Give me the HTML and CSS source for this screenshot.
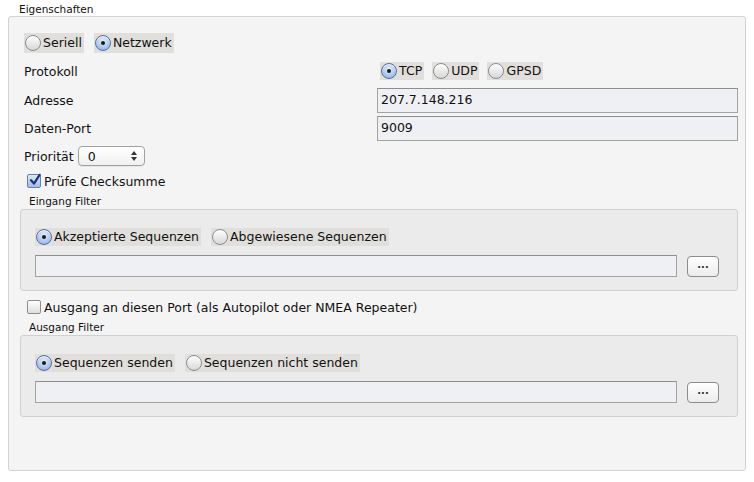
FILE: index.html
```html
<!DOCTYPE html>
<html lang="de">
<head>
<meta charset="utf-8">
<title>Eigenschaften</title>
<link rel="stylesheet" href="styles.css">
</head>
<body>
<div class="caption">Eigenschaften</div>
<div class="panel">
  <div class="row r-type">
    <label class="radio"><span class="dot"></span>Seriell</label>
    <label class="radio on"><span class="dot"></span>Netzwerk</label>
  </div>
  <div class="grid">
    <div class="lbl r-proto">Protokoll</div>
    <div class="row r-proto radios-right">
      <label class="radio on"><span class="dot"></span>TCP</label>
      <label class="radio"><span class="dot"></span>UDP</label>
      <label class="radio"><span class="dot"></span>GPSD</label>
    </div>
    <div class="lbl r-addr">Adresse</div>
    <div class="field r-addr">207.7.148.216</div>
    <div class="lbl r-port">Daten-Port</div>
    <div class="field r-port">9009</div>
  </div>
  <div class="row r-prio">
    <span class="lbl">Priorität</span>
    <span class="select"><span>0</span><span class="arrows"><span class="up"></span><span class="down"></span></span></span>
  </div>
  <label class="row check on r-chk1"><span class="box"><svg viewBox="0 0 14 14" width="14" height="14"><path d="M3 7.2 L6 10.6 L11.6 1.8" fill="none" stroke="#16376f" stroke-width="2.2" stroke-linecap="round" stroke-linejoin="round"/></svg></span>Prüfe Checksumme</label>
  <div class="small">Eingang Filter</div>
  <div class="group">
    <div class="row">
      <label class="radio on"><span class="dot"></span>Akzeptierte Sequenzen</label>
      <label class="radio"><span class="dot"></span>Abgewiesene Sequenzen</label>
    </div>
    <div class="filter-row">
      <div class="field filter"></div>
      <button class="btn">...</button>
    </div>
  </div>
  <label class="row check r-chk2"><span class="box"></span>Ausgang an diesen Port (als Autopilot oder NMEA Repeater)</label>
  <div class="small">Ausgang Filter</div>
  <div class="group">
    <div class="row">
      <label class="radio on"><span class="dot"></span>Sequenzen senden</label>
      <label class="radio"><span class="dot"></span>Sequenzen nicht senden</label>
    </div>
    <div class="filter-row">
      <div class="field filter"></div>
      <button class="btn">...</button>
    </div>
  </div>
</div>
</body>
</html>
```
FILE: styles.css
```css
* { box-sizing: border-box; }
html, body { margin: 0; padding: 0; background: #ffffff; }
body {
  font-family: "DejaVu Sans", "Liberation Sans", sans-serif;
  font-size: 12.5px;
  color: #111;
  width: 754px;
  height: 482px;
  overflow: hidden;
}
.caption {
  font-size: 10.5px;
  line-height: 12px;
  padding: 3px 0 0 19px;
  height: 16px;
}
.panel {
  margin: 0 8px;
  height: 455px;
  border: 1px solid #d2d2d2;
  border-radius: 3px;
  background: #f4f4f4;
  padding: 16px 7px 0 15px;
}
.row { display: flex; align-items: center; gap: 10px; }
.r-type { height: 20px; }
.radio {
  display: inline-flex;
  align-items: center;
  height: 20px;
  padding: 0 2px 0 1px;
  background: #e1dfdb;
  gap: 2px;
  line-height: 20px;
}
.radio .dot {
  width: 16px; height: 16px;
  border-radius: 50%;
  border: 1px solid #8c8c8c;
  background: linear-gradient(#fdfdfd, #d8d8d8);
  box-shadow: inset 0 1px 1px rgba(255,255,255,.8);
  position: relative;
  flex: none;
}
.radio.on .dot {
  border-color: #5a6f95;
  background: radial-gradient(circle at 50% 35%, #e4eefb 0, #a9c6ee 60%, #7da6e0 100%);
}
.radio.on .dot::after {
  content: "";
  position: absolute;
  left: 5px; top: 5px;
  width: 4px; height: 4px;
  border-radius: 50%;
  background: #1a1a1a;
}
.grid {
  display: grid;
  grid-template-columns: 353px 1fr;
  margin-top: 9px;
}
.lbl { display: flex; align-items: center; }
.r-proto { height: 18px; }
.radios-right { gap: 8px; padding-left: 3px; }
.radios-right .radio { height: 18px; }
.r-addr { height: 25px; margin-top: 8px; }
.r-port { height: 25px; margin-top: 3px; }
.field {
  background: #eff0f3;
  border: 1px solid #a3a3a3;
  border-top-color: #8e8e8e;
  padding: 0 3px;
  display: flex;
  align-items: center;
  line-height: 1;
}
.r-prio { height: 20px; margin-top: 5px; gap: 4px; }
.select {
  width: 67px;
  height: 20px;
  border: 1px solid #a0a0a0;
  border-radius: 4px;
  background: linear-gradient(#ffffff, #f0f0f0);
  display: flex;
  align-items: center;
  justify-content: space-between;
  padding: 0 7px 0 9px;
  box-shadow: 0 1px 0 rgba(0,0,0,.05);
}
.arrows { display: flex; flex-direction: column; gap: 2px; }
.up, .down { width: 0; height: 0; border-left: 3px solid transparent; border-right: 3px solid transparent; }
.up { border-bottom: 4px solid #333; }
.down { border-top: 4px solid #333; }
.check { height: 18px; gap: 3px; margin-top: 6px; padding-left: 3px; }
.check .box {
  width: 14px; height: 14px;
  border: 1px solid #8e8e8e;
  border-radius: 2px;
  background: linear-gradient(#ffffff, #dedede);
  display: inline-flex;
  overflow: visible;
  flex: none;
}
.check.on .box {
  border-color: #6a7fa6;
  background: linear-gradient(#dbe8fa, #9ebde9);
}
.check .box svg { margin: -2px 0 0 0; overflow: visible; }
.r-chk2 { margin-top: 7px; }
.small {
  font-size: 10.5px;
  line-height: 12px;
  height: 12px;
  margin: 5px 0 0 5px;
}
.group {
  margin: 2px 0 0 -4px;
  height: 82px;
  border: 1px solid #d0d0d0;
  border-radius: 3px;
  background: #ebebeb;
  padding: 18px 18px 0 14px;
}
.group .row { height: 18px; }
.group .radio { height: 18px; }
.filter-row { display: flex; align-items: center; gap: 10px; margin-top: 9px; }
.filter { flex: 1; height: 22px; }
.btn {
  width: 32px; height: 21px;
  border: 1px solid #8c8c8c;
  border-radius: 4px;
  background: linear-gradient(#ffffff, #ececec);
  font-family: "DejaVu Sans", sans-serif;
  font-size: 10px;
  font-weight: bold;
  color: #333;
  padding: 0 0 3px;
  line-height: 1;
  letter-spacing: 0;
}
```
